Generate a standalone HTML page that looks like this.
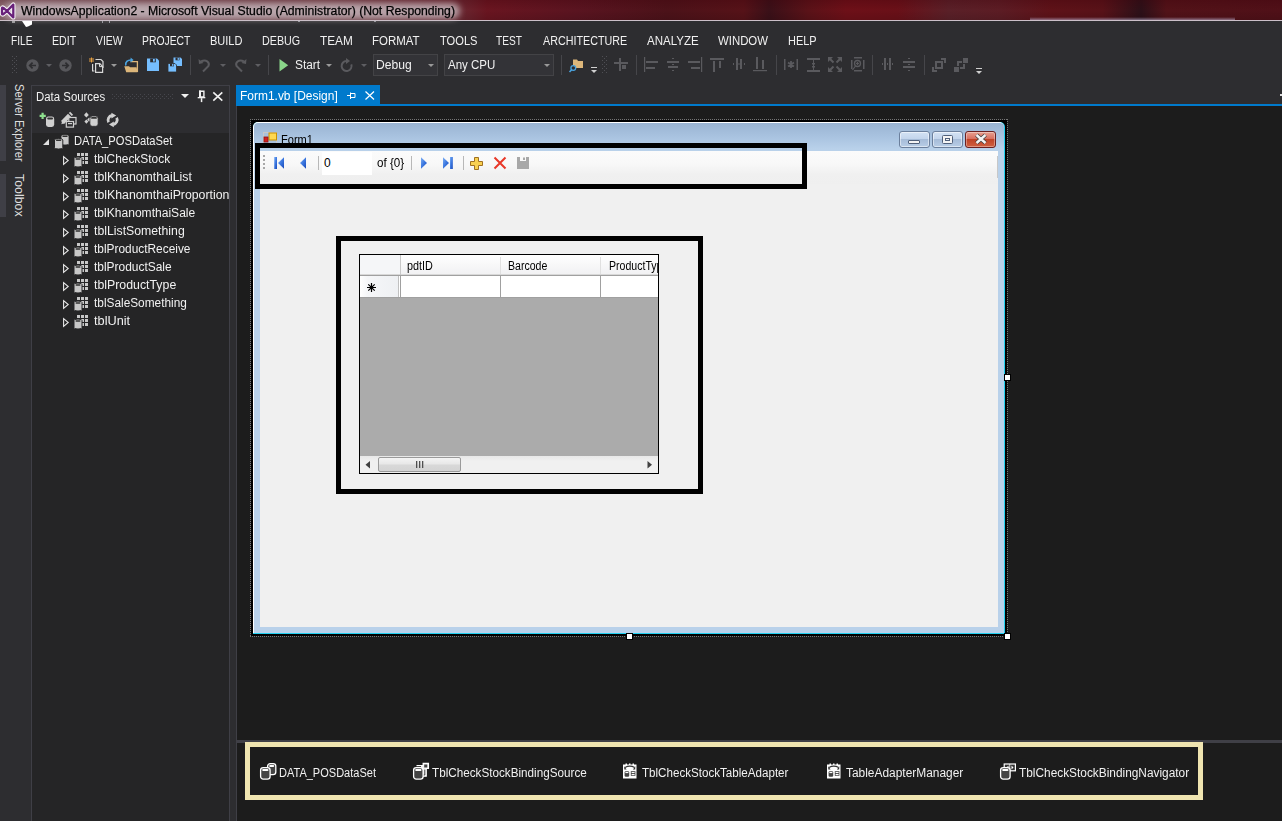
<!DOCTYPE html>
<html><head><meta charset="utf-8">
<style>
*{margin:0;padding:0;box-sizing:border-box}
html,body{width:1282px;height:821px;overflow:hidden;background:#2d2d30;font-family:"Liberation Sans",sans-serif}
body{position:relative}
.a{position:absolute}
.tx{position:absolute;white-space:nowrap}
svg{position:absolute;overflow:visible}
.sep{position:absolute;width:1px;background:#46464a}
.dd{position:absolute;width:0;height:0;border-left:3px solid transparent;border-right:3px solid transparent;border-top:3px solid #999}
</style></head><body>

<!-- ===== TITLE BAR ===== -->
<div class="a" style="left:0;top:0;width:1282px;height:20px;background:linear-gradient(90deg,#8a6870 0%,#7a4850 25%,#6a2630 36%,#6a1520 38%,#5a1420 45%,#4c1219 52%,#561218 58%,#3a1018 60%,#5a1218 63%,#6e1018 66%,#6a1018 70%,#5a2028 74%,#5c1c24 78%,#5e1218 82%,#581218 86%,#2c1018 89%,#521218 91%,#501018 100%)"></div>
<div class="a" style="left:0;top:0;width:1282px;height:20px;background:linear-gradient(180deg,rgba(60,0,10,.25) 0%,rgba(0,0,0,0) 50%,rgba(0,0,0,.1) 100%)"></div>
<div class="a" style="left:4px;top:3px;width:456px;height:16px;background:rgba(200,188,192,.8);filter:blur(3px);border-radius:8px"></div>
<div class="a" style="left:0;top:20px;width:1282px;height:1px;background:#cbbfc8"></div><div class="a" style="left:1030px;top:17px;width:205px;height:3px;background:linear-gradient(180deg,rgba(200,190,220,0) 0%,rgba(200,190,225,.55) 100%);filter:blur(0.6px)"></div>
<svg style="left:0;top:0" width="18" height="21"><g fill="none" stroke-linejoin="round">
<path d="M7,11 L3.4,7.9 Q2,7 2,8.6 V13.4 Q2,15 3.4,14.1 Z M7,11 L13.3,4.6 V17.4 Z" stroke="#f4f0f4" stroke-width="4.4"/>
<path d="M7,11 L3.4,7.9 Q2,7 2,8.6 V13.4 Q2,15 3.4,14.1 Z M7,11 L13.3,4.6 V17.4 Z" stroke="#68217a" stroke-width="2.3"/>
</g></svg>
<svg style="left:12px;top:21px" width="22" height="7"><path d="M0,1 H3" stroke="#fff" stroke-width="1"/><path d="M10,0 H20 V3.5 L16,5.5 L14,6 Z" fill="#fff"/></svg>
<div class="a" style="left:102px;top:21px;width:1px;height:2px;background:#9a9aa0"></div><div class="a" style="left:109px;top:21px;width:1px;height:2px;background:#9a9aa0"></div><div class="a" style="left:298px;top:21px;width:2px;height:1px;background:#9a9aa0"></div><div class="a" style="left:374px;top:21px;width:2px;height:1px;background:#9a9aa0"></div>
<!-- ===== TOOLBAR ===== -->
<!-- grip -->
<svg style="left:12px;top:56px" width="6" height="18"><g fill="#4f4f54">
<rect x="0" y="0" width="1" height="1"/><rect x="4" y="0" width="1" height="1"/><rect x="2" y="2" width="1" height="1"/><rect x="0" y="4" width="1" height="1"/><rect x="4" y="4" width="1" height="1"/><rect x="2" y="6" width="1" height="1"/><rect x="0" y="8" width="1" height="1"/><rect x="4" y="8" width="1" height="1"/><rect x="2" y="10" width="1" height="1"/><rect x="0" y="12" width="1" height="1"/><rect x="4" y="12" width="1" height="1"/><rect x="2" y="14" width="1" height="1"/><rect x="0" y="16" width="1" height="1"/><rect x="4" y="16" width="1" height="1"/></g></svg>
<!-- back / fwd -->
<svg style="left:26px;top:59px" width="13" height="13"><circle cx="6.5" cy="6.5" r="6.2" fill="#57575b"/><path d="M10,6.5 H4 M6.6,3.6 L3.7,6.5 L6.6,9.4" fill="none" stroke="#2d2d30" stroke-width="1.7"/></svg>
<div class="dd" style="left:46px;top:64px;border-top-color:#5e5e62"></div>
<svg style="left:59px;top:59px" width="13" height="13"><circle cx="6.5" cy="6.5" r="6.2" fill="#57575b"/><path d="M3,6.5 H9 M6.4,3.6 L9.3,6.5 L6.4,9.4" fill="none" stroke="#2d2d30" stroke-width="1.7"/></svg>
<div class="sep" style="left:81px;top:55px;height:20px"></div>
<!-- new project -->
<svg style="left:89px;top:57px" width="16" height="16">
<g fill="#e8a040"><rect x="2" y="0.5" width="1" height="5"/><rect x="0" y="2.5" width="5" height="1"/><rect x="0.5" y="1" width="1" height="1"/><rect x="3.5" y="1" width="1" height="1"/><rect x="0.5" y="4" width="1" height="1"/><rect x="3.5" y="4" width="1" height="1"/></g>
<path d="M6.5,2.5 H12 L14,4.5 V11" fill="none" stroke="#d8d8d8" stroke-width="1.2"/>
<path d="M3.6,7 V14 H5.5" fill="none" stroke="#d8d8d8" stroke-width="1.2"/>
<path d="M6.6,6.6 H10.8 L13.6,9.4 V15.4 H6.6 Z" fill="#2d2d30" stroke="#d8d8d8" stroke-width="1.2"/>
<path d="M10.5,6.6 V9.6 H13.6" fill="none" stroke="#d8d8d8" stroke-width="1"/>
</svg>
<div class="dd" style="left:111px;top:64px;border-top-color:#9a9a9a"></div>
<!-- open -->
<svg style="left:124px;top:57px" width="16" height="16">
<path d="M6.5,4.6 H13.4 V15" fill="none" stroke="#dcb67a" stroke-width="1.3"/>
<path d="M0.3,9.3 H5 L6,10.3 H12.6 L13.6,15.2 H2.2 Z" fill="#dcb67a"/>
<path d="M1.8,8.5 C1.2,5 3.5,3 7,3" fill="none" stroke="#4aa3df" stroke-width="1.6"/>
<path d="M6.6,0.4 L9.6,3 L6.6,5.6 Z" fill="#4aa3df"/>
</svg>
<!-- save -->
<svg style="left:147px;top:58px" width="14" height="14"><path d="M0,0.5 H10 L12,2.5 V13 H0 Z" fill="#75beff"/><rect x="3.2" y="0.5" width="5.6" height="3.8" fill="#2d2d30"/><rect x="6" y="1" width="1.8" height="2.6" fill="#75beff"/></svg>
<!-- save all -->
<svg style="left:168px;top:57px" width="15" height="16"><path d="M5.5,0.5 H12.5 L14,2 V9 H5.5 Z" fill="#75beff"/><rect x="7.5" y="0.5" width="4" height="2.8" fill="#2d2d30"/><rect x="9.6" y="0.9" width="1.3" height="2" fill="#75beff"/><path d="M0,6.5 H7 L8.5,8 V15 H0 Z" fill="#75beff" stroke="#2d2d30" stroke-width="0.8"/><rect x="2" y="6.5" width="4" height="2.8" fill="#2d2d30"/><rect x="4.1" y="6.9" width="1.3" height="2" fill="#75beff"/></svg>
<div class="sep" style="left:190px;top:55px;height:20px"></div>
<!-- undo / redo -->
<svg style="left:198px;top:58px" width="14" height="14"><path d="M3,3.5 C8,1 12,4 10.5,8 L5,13.5" fill="none" stroke="#5a5a5e" stroke-width="2"/><path d="M0.5,1 L1,6 L5.5,5 Z" fill="#5a5a5e"/></svg>
<div class="dd" style="left:220px;top:64px;border-top-color:#5e5e62"></div>
<svg style="left:233px;top:58px" width="14" height="14"><path d="M11,3.5 C6,1 2,4 3.5,8 L9,13.5" fill="none" stroke="#5a5a5e" stroke-width="2"/><path d="M13.5,1 L13,6 L8.5,5 Z" fill="#5a5a5e"/></svg>
<div class="dd" style="left:255px;top:64px;border-top-color:#5e5e62"></div>
<div class="sep" style="left:268px;top:55px;height:20px"></div>
<!-- start -->
<svg style="left:279px;top:59px" width="10" height="13"><path d="M0.5,0 L9.2,6.3 L0.5,12.6 Z" fill="#8ad68a"/></svg>
<div class="dd" style="left:326px;top:64px;border-top-color:#9a9a9a"></div>
<svg style="left:340px;top:58px" width="14" height="15"><path d="M6.5,3 A5,5 0 1 0 11.3,6.3" fill="none" stroke="#5a5a5e" stroke-width="2"/><path d="M6,0 L10,3 L6,6 Z" fill="#5a5a5e"/></svg>
<div class="dd" style="left:361px;top:64px;border-top-color:#5e5e62"></div>
<!-- combos -->
<div class="a" style="left:373px;top:54px;width:65px;height:22px;background:#333337;border:1px solid #434346"></div>
<div class="dd" style="left:428px;top:64px;border-top-color:#999"></div>
<div class="a" style="left:444px;top:54px;width:110px;height:22px;background:#333337;border:1px solid #434346"></div>
<div class="dd" style="left:544px;top:64px;border-top-color:#999"></div>
<div class="sep" style="left:561px;top:55px;height:20px"></div>
<!-- find -->
<svg style="left:569px;top:58px" width="15" height="15"><path d="M4,1.5 H8 L9,3 H14 V10 H4 Z" fill="#dcb67a"/><path d="M4,3 H14 V10 H4Z" fill="#dcb67a"/><circle cx="4.3" cy="10" r="2.4" fill="#2d2d30" stroke="#4aa3df" stroke-width="1.3"/><path d="M2.6,11.8 L0.5,14" stroke="#4aa3df" stroke-width="1.6"/></svg>
<svg style="left:591px;top:67px" width="7" height="7"><rect x="0" y="0" width="6" height="1" fill="#d0d0d0"/><path d="M0,3 H6 L3,6 Z" fill="#d0d0d0"/></svg>
<svg style="left:602px;top:56px" width="6" height="18"><g fill="#4f4f54">
<rect x="0" y="0" width="1" height="1"/><rect x="4" y="0" width="1" height="1"/><rect x="2" y="2" width="1" height="1"/><rect x="0" y="4" width="1" height="1"/><rect x="4" y="4" width="1" height="1"/><rect x="2" y="6" width="1" height="1"/><rect x="0" y="8" width="1" height="1"/><rect x="4" y="8" width="1" height="1"/><rect x="2" y="10" width="1" height="1"/><rect x="0" y="12" width="1" height="1"/><rect x="4" y="12" width="1" height="1"/><rect x="2" y="14" width="1" height="1"/><rect x="0" y="16" width="1" height="1"/><rect x="4" y="16" width="1" height="1"/></g></svg>
<!-- layout toolbar gray icons -->
<g></g>
<svg style="left:614px;top:58px" width="15" height="14"><g fill="#5a5a5e"><rect x="5" y="0" width="2" height="13"/><rect x="0" y="4" width="14" height="2"/><rect x="8" y="7" width="4" height="4"/></g></svg>
<div class="sep" style="left:636px;top:55px;height:20px"></div>
<svg style="left:644px;top:57px" width="16" height="16"><g fill="#5a5a5e"><rect x="0" y="0" width="1.2" height="15"/><rect x="2" y="4" width="12" height="2"/><rect x="2" y="10" width="9" height="2"/></g></svg>
<svg style="left:667px;top:57px" width="14" height="16"><g fill="#5a5a5e"><rect x="0" y="4" width="12" height="2"/><rect x="1" y="9" width="10" height="2"/><rect x="5" y="1" width="2" height="1"/><rect x="5" y="7" width="2" height="1"/><rect x="5" y="13" width="2" height="1"/></g></svg>
<svg style="left:688px;top:57px" width="16" height="16"><g fill="#5a5a5e"><rect x="13" y="0" width="1.2" height="15"/><rect x="0" y="4" width="12" height="2"/><rect x="3" y="10" width="9" height="2"/></g></svg>
<svg style="left:710px;top:57px" width="16" height="16"><g fill="#5a5a5e"><rect x="0" y="1" width="14" height="2"/><rect x="3" y="4" width="2" height="11"/><rect x="9" y="4" width="2" height="7"/></g></svg>
<svg style="left:733px;top:57px" width="14" height="16"><g fill="#5a5a5e"><rect x="3" y="1" width="2" height="12"/><rect x="7" y="2" width="2" height="10"/><rect x="0" y="6" width="1" height="2"/><rect x="5.5" y="6" width="1" height="2"/><rect x="11" y="6" width="1" height="2"/></g></svg>
<svg style="left:753px;top:57px" width="16" height="16"><g fill="#5a5a5e"><rect x="0" y="13" width="14" height="1.2"/><rect x="3" y="0" width="2" height="12"/><rect x="9" y="3" width="2" height="9"/></g></svg>
<div class="sep" style="left:776px;top:55px;height:20px"></div>
<svg style="left:784px;top:58px" width="15" height="14"><g fill="#5a5a5e"><rect x="0" y="1" width="1.5" height="11"/><rect x="12.5" y="1" width="1.5" height="11"/><path d="M7,3 V10 M4,4.5 L10,8.5 M10,4.5 L4,8.5" stroke="#5a5a5e" stroke-width="1.8"/></g></svg>
<svg style="left:807px;top:57px" width="14" height="16"><g fill="#5a5a5e"><rect x="0" y="1" width="13" height="2"/><rect x="0" y="13" width="13" height="2"/><rect x="6" y="3" width="1" height="10"/><rect x="5" y="6" width="3" height="1.5"/><rect x="5" y="9" width="3" height="1.5"/></g></svg>
<svg style="left:828px;top:57px" width="15" height="16"><g fill="none" stroke="#5a5a5e" stroke-width="2"><path d="M1,1 L5.5,5.5 M13,1 L8.5,5.5 M1,14 L5.5,9.5 M13,14 L8.5,9.5"/></g><g fill="#5a5a5e"><path d="M0,0 H5 L0,5Z M14,0 H9 L14,5Z M0,15 H5 L0,10Z M14,15 H9 L14,10Z"/></g></svg>
<svg style="left:851px;top:57px" width="14" height="16"><g fill="#5a5a5e"><rect x="3" y="0" width="8" height="1.5"/><rect x="3" y="13" width="8" height="1.5"/><rect x="0" y="3" width="1.5" height="9"/><rect x="12" y="3" width="1.5" height="9"/></g><circle cx="6.5" cy="6.5" r="3" fill="none" stroke="#5a5a5e" stroke-width="1.3"/><path d="M6.5,5 V8 M5,6.5 H8 M4.5,9 L1.5,13" stroke="#5a5a5e" stroke-width="1.2"/></svg>
<div class="sep" style="left:872px;top:55px;height:20px"></div>
<svg style="left:882px;top:57px" width="12" height="16"><g fill="#5a5a5e"><rect x="2" y="1" width="2" height="12"/><rect x="7" y="1" width="2" height="12"/><rect x="0" y="6" width="1" height="2"/><rect x="5" y="6" width="1" height="2"/><rect x="10" y="6" width="1" height="2"/></g></svg>
<svg style="left:903px;top:57px" width="13" height="16"><g fill="#5a5a5e"><rect x="0" y="4" width="12" height="2"/><rect x="0" y="9" width="12" height="2"/><rect x="5" y="1" width="2" height="1"/><rect x="5" y="7" width="2" height="1"/><rect x="5" y="13" width="2" height="1"/></g></svg>
<div class="sep" style="left:924px;top:55px;height:20px"></div>
<svg style="left:932px;top:58px" width="15" height="15"><g fill="#5a5a5e"><path d="M3,3 H11 V11 H3 Z M5,5 V9 H9 V5 Z" fill-rule="evenodd"/><path d="M9,0 H14 V5 H12 V2 H9Z"/><path d="M0,9 H2 V12 H5 V14 H0Z"/></g></svg>
<svg style="left:954px;top:58px" width="15" height="15"><g fill="#5a5a5e"><rect x="9" y="0" width="5" height="5"/><rect x="0" y="9" width="5" height="5"/><path d="M3,3 H8 V5 H5 V8 H3Z"/><path d="M11,6 V11 H6 V9 H9 V6Z"/></g></svg>
<svg style="left:976px;top:68px" width="7" height="7"><rect x="0" y="0" width="6" height="1" fill="#d0d0d0"/><path d="M0,3 H6 L3,6 Z" fill="#d0d0d0"/></svg>

<!-- ===== LEFT STRIP ===== -->
<div class="a" style="left:0;top:85px;width:6px;height:76px;background:#3f3f46"></div>
<div class="a" style="left:0;top:174px;width:6px;height:43px;background:#3f3f46"></div>
<div class="tx" style="left:25px;top:84px;font-size:12px;line-height:12px;color:#dedede;transform-origin:0 0;transform:rotate(90deg) scaleX(0.933)">Server Explorer</div>
<div class="tx" style="left:25px;top:173.5px;font-size:12px;line-height:12px;color:#dedede;transform-origin:0 0;transform:rotate(90deg) scaleX(1.03)">Toolbox</div>

<!-- ===== DATA SOURCES PANEL ===== -->
<div class="a" style="left:31px;top:85px;width:199px;height:736px;border:1px solid #3f3f46;border-bottom:none;background:#2d2d30"></div>
<div class="a" style="left:32px;top:133px;width:197px;height:688px;background:#252526"></div>
<!-- header dots -->
<svg style="left:112px;top:94px" width="62" height="5"><defs><pattern id="gd" width="4" height="4" patternUnits="userSpaceOnUse"><rect x="0" y="0" width="1" height="1" fill="#46464c"/><rect x="2" y="2" width="1" height="1" fill="#46464c"/></pattern></defs><rect width="62" height="5" fill="url(#gd)"/></svg>
<svg style="left:181px;top:94px" width="9" height="5"><path d="M0,0 H8 L4,4 Z" fill="#f1f1f1"/></svg>
<svg style="left:197px;top:90px" width="10" height="13"><path d="M2.7,1.3 H6.9 V7 H2.7 Z" fill="none" stroke="#f1f1f1" stroke-width="1.4"/><rect x="2" y="0.6" width="2" height="6.8" fill="#f1f1f1"/><rect x="0.7" y="7" width="7.6" height="1.3" fill="#f1f1f1"/><rect x="3.8" y="8.2" width="1.5" height="3.9" fill="#f1f1f1"/></svg>
<svg style="left:212px;top:91px" width="12" height="11"><path d="M1.3,1.3 L10.3,9.7 M10.3,1.3 L1.3,9.7" stroke="#f1f1f1" stroke-width="1.6"/></svg>
<!-- panel toolbar icons -->
<svg style="left:39px;top:112px" width="17" height="16"><path d="M3.6,0.8 V7 M0.6,3.9 H6.8" stroke="#8ee08e" stroke-width="2.2"/><rect x="7" y="4.6" width="8.2" height="10.4" rx="2.4" fill="#d0d0d0"/><rect x="8.2" y="5.6" width="5.8" height="1.8" rx="0.9" fill="#333"/></svg>
<svg style="left:61px;top:112px" width="17" height="16"><path d="M1.5,10.5 L8.5,3.3" stroke="#d0d0d0" stroke-width="4.2"/><path d="M9.3,2.5 L10.6,1.2" stroke="#d0d0d0" stroke-width="4.2"/><path d="M0.3,12.2 L1.2,9 L3.5,11.3 Z" fill="#d0d0d0"/><rect x="7.8" y="5.5" width="7.2" height="6.5" fill="#2d2d30" stroke="#d0d0d0" stroke-width="1.2"/><rect x="5.3" y="9.5" width="7.2" height="5.6" fill="#2d2d30" stroke="#d0d0d0" stroke-width="1.2"/><rect x="7" y="11" width="4" height="1.2" fill="#d0d0d0"/></svg>
<svg style="left:83px;top:111px" width="17" height="17"><path d="M3.4,1.3 L5.8,3.9 L3.4,6.5 L1,3.9 Z M6.2,6.4 L8.2,8.6 L6.2,10.8 L4.2,8.6 Z M3.4,8.4 L5.4,10.6 L3.4,12.8 L1.4,10.6 Z" fill="#d0d0d0"/><rect x="6.9" y="5" width="8.2" height="10.3" rx="2.4" fill="#d0d0d0" stroke="#2d2d30" stroke-width="0.8"/><rect x="8.1" y="6" width="5.8" height="1.8" rx="0.9" fill="#333"/></svg>
<svg style="left:106px;top:113px" width="14" height="14"><path d="M2.6,9.3 A4.6,4.6 0 0 1 6,2.5" fill="none" stroke="#d0d0d0" stroke-width="2.8"/><path d="M10.6,4.7 A4.6,4.6 0 0 1 7.2,11.5" fill="none" stroke="#d0d0d0" stroke-width="2.8"/><path d="M5.4,-0.2 L10.2,2.6 L5.4,5.4 Z M7.8,8.6 L3,11.4 L7.8,14.2 Z" fill="#d0d0d0"/></svg>

<!-- tree icons -->
<svg style="left:43px;top:139px" width="7" height="7"><path d="M6,0 V6 H0 Z" fill="#e0e0e0"/></svg>
<svg style="left:54px;top:134px" width="16" height="16"><path d="M7,2 Q7,0.5 11,0.5 Q15,0.5 15,2 V9.5 Q15,11 11,11 Q7,11 7,9.5 Z" fill="#c8c8c8" stroke="#252526" stroke-width="0.8"/><rect x="8.3" y="1.5" width="5.4" height="1.6" rx="0.8" fill="#303030"/><path d="M0.5,6 Q0.5,4.5 4.6,4.5 Q8.8,4.5 8.8,6 V13.5 Q8.8,15 4.6,15 Q0.5,15 0.5,13.5 Z" fill="#c8c8c8" stroke="#252526" stroke-width="1"/><rect x="1.9" y="5.5" width="5.4" height="1.6" rx="0.8" fill="#303030"/></svg>
<svg style="left:63px;top:156px" width="6" height="9"><path d="M0.6,0.6 L5.2,4.5 L0.6,8.4 Z" fill="none" stroke="#e8e8e8" stroke-width="1.1"/></svg>
<svg style="left:74px;top:153px" width="15" height="15"><g fill="#c8c8c8"><rect x="3" y="0" width="3" height="3"/><rect x="7" y="0" width="3" height="3"/><rect x="11" y="0" width="3" height="3"/><rect x="7" y="4" width="3" height="3"/><rect x="11" y="4" width="3" height="3"/><rect x="7" y="8" width="3" height="3"/><rect x="11" y="8" width="3" height="3"/></g><path d="M0,5.5 Q0,4 4,4 Q8,4 8,5.5 V12.5 Q8,14 4,14 Q0,14 0,12.5 Z" fill="#c8c8c8" stroke="#252526" stroke-width="1"/><rect x="1.5" y="5.2" width="5" height="1.6" rx="0.8" fill="#303030"/></svg>
<svg style="left:63px;top:174px" width="6" height="9"><path d="M0.6,0.6 L5.2,4.5 L0.6,8.4 Z" fill="none" stroke="#e8e8e8" stroke-width="1.1"/></svg>
<svg style="left:74px;top:171px" width="15" height="15"><g fill="#c8c8c8"><rect x="3" y="0" width="3" height="3"/><rect x="7" y="0" width="3" height="3"/><rect x="11" y="0" width="3" height="3"/><rect x="7" y="4" width="3" height="3"/><rect x="11" y="4" width="3" height="3"/><rect x="7" y="8" width="3" height="3"/><rect x="11" y="8" width="3" height="3"/></g><path d="M0,5.5 Q0,4 4,4 Q8,4 8,5.5 V12.5 Q8,14 4,14 Q0,14 0,12.5 Z" fill="#c8c8c8" stroke="#252526" stroke-width="1"/><rect x="1.5" y="5.2" width="5" height="1.6" rx="0.8" fill="#303030"/></svg>
<svg style="left:63px;top:192px" width="6" height="9"><path d="M0.6,0.6 L5.2,4.5 L0.6,8.4 Z" fill="none" stroke="#e8e8e8" stroke-width="1.1"/></svg>
<svg style="left:74px;top:189px" width="15" height="15"><g fill="#c8c8c8"><rect x="3" y="0" width="3" height="3"/><rect x="7" y="0" width="3" height="3"/><rect x="11" y="0" width="3" height="3"/><rect x="7" y="4" width="3" height="3"/><rect x="11" y="4" width="3" height="3"/><rect x="7" y="8" width="3" height="3"/><rect x="11" y="8" width="3" height="3"/></g><path d="M0,5.5 Q0,4 4,4 Q8,4 8,5.5 V12.5 Q8,14 4,14 Q0,14 0,12.5 Z" fill="#c8c8c8" stroke="#252526" stroke-width="1"/><rect x="1.5" y="5.2" width="5" height="1.6" rx="0.8" fill="#303030"/></svg>
<svg style="left:63px;top:210px" width="6" height="9"><path d="M0.6,0.6 L5.2,4.5 L0.6,8.4 Z" fill="none" stroke="#e8e8e8" stroke-width="1.1"/></svg>
<svg style="left:74px;top:207px" width="15" height="15"><g fill="#c8c8c8"><rect x="3" y="0" width="3" height="3"/><rect x="7" y="0" width="3" height="3"/><rect x="11" y="0" width="3" height="3"/><rect x="7" y="4" width="3" height="3"/><rect x="11" y="4" width="3" height="3"/><rect x="7" y="8" width="3" height="3"/><rect x="11" y="8" width="3" height="3"/></g><path d="M0,5.5 Q0,4 4,4 Q8,4 8,5.5 V12.5 Q8,14 4,14 Q0,14 0,12.5 Z" fill="#c8c8c8" stroke="#252526" stroke-width="1"/><rect x="1.5" y="5.2" width="5" height="1.6" rx="0.8" fill="#303030"/></svg>
<svg style="left:63px;top:228px" width="6" height="9"><path d="M0.6,0.6 L5.2,4.5 L0.6,8.4 Z" fill="none" stroke="#e8e8e8" stroke-width="1.1"/></svg>
<svg style="left:74px;top:225px" width="15" height="15"><g fill="#c8c8c8"><rect x="3" y="0" width="3" height="3"/><rect x="7" y="0" width="3" height="3"/><rect x="11" y="0" width="3" height="3"/><rect x="7" y="4" width="3" height="3"/><rect x="11" y="4" width="3" height="3"/><rect x="7" y="8" width="3" height="3"/><rect x="11" y="8" width="3" height="3"/></g><path d="M0,5.5 Q0,4 4,4 Q8,4 8,5.5 V12.5 Q8,14 4,14 Q0,14 0,12.5 Z" fill="#c8c8c8" stroke="#252526" stroke-width="1"/><rect x="1.5" y="5.2" width="5" height="1.6" rx="0.8" fill="#303030"/></svg>
<svg style="left:63px;top:246px" width="6" height="9"><path d="M0.6,0.6 L5.2,4.5 L0.6,8.4 Z" fill="none" stroke="#e8e8e8" stroke-width="1.1"/></svg>
<svg style="left:74px;top:243px" width="15" height="15"><g fill="#c8c8c8"><rect x="3" y="0" width="3" height="3"/><rect x="7" y="0" width="3" height="3"/><rect x="11" y="0" width="3" height="3"/><rect x="7" y="4" width="3" height="3"/><rect x="11" y="4" width="3" height="3"/><rect x="7" y="8" width="3" height="3"/><rect x="11" y="8" width="3" height="3"/></g><path d="M0,5.5 Q0,4 4,4 Q8,4 8,5.5 V12.5 Q8,14 4,14 Q0,14 0,12.5 Z" fill="#c8c8c8" stroke="#252526" stroke-width="1"/><rect x="1.5" y="5.2" width="5" height="1.6" rx="0.8" fill="#303030"/></svg>
<svg style="left:63px;top:264px" width="6" height="9"><path d="M0.6,0.6 L5.2,4.5 L0.6,8.4 Z" fill="none" stroke="#e8e8e8" stroke-width="1.1"/></svg>
<svg style="left:74px;top:261px" width="15" height="15"><g fill="#c8c8c8"><rect x="3" y="0" width="3" height="3"/><rect x="7" y="0" width="3" height="3"/><rect x="11" y="0" width="3" height="3"/><rect x="7" y="4" width="3" height="3"/><rect x="11" y="4" width="3" height="3"/><rect x="7" y="8" width="3" height="3"/><rect x="11" y="8" width="3" height="3"/></g><path d="M0,5.5 Q0,4 4,4 Q8,4 8,5.5 V12.5 Q8,14 4,14 Q0,14 0,12.5 Z" fill="#c8c8c8" stroke="#252526" stroke-width="1"/><rect x="1.5" y="5.2" width="5" height="1.6" rx="0.8" fill="#303030"/></svg>
<svg style="left:63px;top:282px" width="6" height="9"><path d="M0.6,0.6 L5.2,4.5 L0.6,8.4 Z" fill="none" stroke="#e8e8e8" stroke-width="1.1"/></svg>
<svg style="left:74px;top:279px" width="15" height="15"><g fill="#c8c8c8"><rect x="3" y="0" width="3" height="3"/><rect x="7" y="0" width="3" height="3"/><rect x="11" y="0" width="3" height="3"/><rect x="7" y="4" width="3" height="3"/><rect x="11" y="4" width="3" height="3"/><rect x="7" y="8" width="3" height="3"/><rect x="11" y="8" width="3" height="3"/></g><path d="M0,5.5 Q0,4 4,4 Q8,4 8,5.5 V12.5 Q8,14 4,14 Q0,14 0,12.5 Z" fill="#c8c8c8" stroke="#252526" stroke-width="1"/><rect x="1.5" y="5.2" width="5" height="1.6" rx="0.8" fill="#303030"/></svg>
<svg style="left:63px;top:300px" width="6" height="9"><path d="M0.6,0.6 L5.2,4.5 L0.6,8.4 Z" fill="none" stroke="#e8e8e8" stroke-width="1.1"/></svg>
<svg style="left:74px;top:297px" width="15" height="15"><g fill="#c8c8c8"><rect x="3" y="0" width="3" height="3"/><rect x="7" y="0" width="3" height="3"/><rect x="11" y="0" width="3" height="3"/><rect x="7" y="4" width="3" height="3"/><rect x="11" y="4" width="3" height="3"/><rect x="7" y="8" width="3" height="3"/><rect x="11" y="8" width="3" height="3"/></g><path d="M0,5.5 Q0,4 4,4 Q8,4 8,5.5 V12.5 Q8,14 4,14 Q0,14 0,12.5 Z" fill="#c8c8c8" stroke="#252526" stroke-width="1"/><rect x="1.5" y="5.2" width="5" height="1.6" rx="0.8" fill="#303030"/></svg>
<svg style="left:63px;top:318px" width="6" height="9"><path d="M0.6,0.6 L5.2,4.5 L0.6,8.4 Z" fill="none" stroke="#e8e8e8" stroke-width="1.1"/></svg>
<svg style="left:74px;top:315px" width="15" height="15"><g fill="#c8c8c8"><rect x="3" y="0" width="3" height="3"/><rect x="7" y="0" width="3" height="3"/><rect x="11" y="0" width="3" height="3"/><rect x="7" y="4" width="3" height="3"/><rect x="11" y="4" width="3" height="3"/><rect x="7" y="8" width="3" height="3"/><rect x="11" y="8" width="3" height="3"/></g><path d="M0,5.5 Q0,4 4,4 Q8,4 8,5.5 V12.5 Q8,14 4,14 Q0,14 0,12.5 Z" fill="#c8c8c8" stroke="#252526" stroke-width="1"/><rect x="1.5" y="5.2" width="5" height="1.6" rx="0.8" fill="#303030"/></svg>

<!-- ===== DOCUMENT AREA ===== -->
<div class="a" style="left:236px;top:85px;width:144px;height:21px;background:#007acc"></div>
<div class="a" style="left:236px;top:104px;width:1046px;height:2px;background:#007acc"></div>
<svg style="left:347px;top:92px" width="9" height="8"><path d="M0,3.5 H3 M3.5,0.5 V7 M3.5,1.5 H8 V5.5 H3.5" fill="none" stroke="#fff" stroke-width="1"/></svg>
<svg style="left:365px;top:91px" width="10" height="9"><path d="M0.5,0.5 L9,8.5 M9,0.5 L0.5,8.5" stroke="#fff" stroke-width="1.2"/></svg>
<div class="a" style="left:236px;top:106px;width:1046px;height:715px;background:#1c1c1c;border-left:1px solid #3f3f46"></div>

<!-- selection dotted frame -->
<div class="a" style="left:251px;top:120px;width:756px;height:516px;background:#000"></div>
<div class="a" style="left:250px;top:119px;width:758px;height:1px;background-image:linear-gradient(90deg,#767676 50%,transparent 50%);background-size:2px 1px"></div>
<div class="a" style="left:250px;top:636px;width:758px;height:1px;background-image:linear-gradient(90deg,#767676 50%,transparent 50%);background-size:2px 1px"></div>
<div class="a" style="left:250px;top:119px;width:1px;height:518px;background-image:linear-gradient(180deg,#767676 50%,transparent 50%);background-size:1px 2px"></div>
<div class="a" style="left:1007px;top:119px;width:1px;height:518px;background-image:linear-gradient(180deg,#767676 50%,transparent 50%);background-size:1px 2px"></div>

<!-- form window -->
<div class="a" style="left:253px;top:122px;width:752px;height:512px;border-radius:5px 5px 0 0;background:#20d0f0"></div>
<div class="a" style="left:253px;top:122px;width:751px;height:511px;border-radius:5px 5px 0 0;background:#fff"></div>
<div class="a" style="left:254px;top:123px;width:750px;height:510px;border-radius:4px 4px 0 0;background:linear-gradient(180deg,#9ab4d2 0px,#a9c3e0 14px,#b9d1ea 26px,#b9d1ea 100%)"></div>
<div class="a" style="left:260px;top:151px;width:738px;height:476px;background:#f0f0f0"></div>
<!-- form icon -->
<svg style="left:263px;top:132px" width="15" height="12"><rect x="0.5" y="0.5" width="13" height="11" fill="#a8c0dc" stroke="#c8c8c8" stroke-width="1"/><rect x="6" y="1" width="7.5" height="7" fill="#ffd850" stroke="#c89000" stroke-width="1"/><rect x="1" y="5" width="4" height="5" fill="#d02020" stroke="#901010" stroke-width="0.8"/></svg>
<div class="tx" style="left:281.4px;top:133px;font-size:12px;line-height:14px;color:#000;transform:scaleX(0.92);transform-origin:0 0">Form1</div>
<!-- caption buttons -->
<div class="a" style="left:899px;top:131px;width:31px;height:17px;border:1px solid #6b7f9c;border-radius:3px;background:linear-gradient(180deg,#d3e2f4 0%,#c3d5ec 45%,#a6bcd8 50%,#b8cde6 100%);box-shadow:inset 0 0 0 1px rgba(255,255,255,.5)"></div>
<div class="a" style="left:908px;top:140px;width:12px;height:4px;background:#f4f4f4;border:1px solid #50607a;border-radius:1px"></div>
<div class="a" style="left:932px;top:131px;width:31px;height:17px;border:1px solid #6b7f9c;border-radius:3px;background:linear-gradient(180deg,#d3e2f4 0%,#c3d5ec 45%,#a6bcd8 50%,#b8cde6 100%);box-shadow:inset 0 0 0 1px rgba(255,255,255,.5)"></div>
<svg style="left:941px;top:134px" width="13" height="11"><rect x="1.5" y="1.5" width="10" height="8" rx="1" fill="#f4f4f4" stroke="#50607a" stroke-width="1"/><rect x="4.5" y="4.5" width="4" height="2" fill="#f4f4f4" stroke="#50607a" stroke-width="1"/></svg>
<div class="a" style="left:965px;top:131px;width:31px;height:17px;border:1px solid #6b2020;border-radius:3px;background:linear-gradient(180deg,#e8a090 0%,#d87060 45%,#c04428 50%,#d06040 100%);box-shadow:inset 0 0 0 1px rgba(255,255,255,.35)"></div>
<svg style="left:974px;top:133px" width="14" height="12"><path d="M2.5,2 L11.5,10 M11.5,2 L2.5,10" stroke="#404040" stroke-width="4"/><path d="M2.5,2 L11.5,10 M11.5,2 L2.5,10" stroke="#f4f4f4" stroke-width="2.4"/></svg>

<!-- binding navigator toolbar -->
<div class="a" style="left:260px;top:151px;width:738px;height:33px;background:linear-gradient(180deg,#fbfbfb 0%,#f8f8f8 40%,#f0f0f0 70%,#efefef 100%)"></div>
<div class="a" style="left:997px;top:156px;width:1px;height:22px;background:#c8c8c8"></div>
<svg style="left:263px;top:155px" width="3" height="15"><g fill="#a8a8a8"><rect x="0" y="0" width="2" height="2"/><rect x="0" y="4" width="2" height="2"/><rect x="0" y="8" width="2" height="2"/><rect x="0" y="12" width="2" height="2"/></g></svg>
<svg style="left:273px;top:157px" width="12" height="12"><defs><linearGradient id="nb" x1="0" y1="0" x2="1" y2="1"><stop offset="0" stop-color="#7eb0f4"/><stop offset="0.5" stop-color="#3c78e0"/><stop offset="1" stop-color="#1848b8"/></linearGradient></defs><rect x="1.2" y="0" width="2.8" height="12" fill="url(#nb)"/><path d="M11,0.3 V11.7 L5,6 Z" fill="url(#nb)"/></svg>
<svg style="left:299px;top:157px" width="8" height="12"><path d="M7,0.3 V11.7 L1,6 Z" fill="url(#nb)"/></svg>
<div class="a" style="left:318px;top:156px;width:1px;height:14px;background:#b8b8b8"></div>
<div class="a" style="left:322px;top:152px;width:50px;height:23px;background:#fff"></div>
<div class="tx" style="left:324px;top:156px;font-size:12px;line-height:14px;color:#000">0</div>
<div class="tx" style="left:376.7px;top:156px;font-size:12px;line-height:14px;color:#000;transform:scaleX(0.97);transform-origin:0 0">of {0}</div>
<div class="a" style="left:411px;top:156px;width:1px;height:14px;background:#b8b8b8"></div>
<svg style="left:420px;top:157px" width="8" height="12"><path d="M1,0.3 V11.7 L7,6 Z" fill="url(#nb)"/></svg>
<svg style="left:442px;top:157px" width="12" height="12"><path d="M1,0.3 V11.7 L7,6 Z" fill="url(#nb)"/><rect x="8" y="0" width="2.8" height="12" fill="url(#nb)"/></svg>
<div class="a" style="left:463px;top:156px;width:1px;height:14px;background:#b8b8b8"></div>
<svg style="left:470px;top:157px" width="13" height="13"><path d="M4.5,0.5 H8.5 V4.5 H12.5 V8.5 H8.5 V12.5 H4.5 V8.5 H0.5 V4.5 H4.5 Z" fill="#f8d050" stroke="#a07020" stroke-width="1"/></svg>
<svg style="left:493px;top:156px" width="14" height="14"><path d="M1.5,1.5 L12.5,12.5 M12.5,1.5 L1.5,12.5" stroke="#e83828" stroke-width="2"/></svg>
<svg style="left:517px;top:157px" width="13" height="13"><path d="M0,0 H3 V4 H9 V0 H12 V12 H0 Z" fill="#a8a8a8"/><rect x="6" y="0.5" width="2" height="2.5" fill="#a8a8a8"/></svg>

<!-- DataGridView -->
<div class="a" style="left:359px;top:254px;width:300px;height:220px;background:#ababab;border:1px solid #000"></div>
<div class="a" style="left:360px;top:255px;width:298px;height:21px;background:linear-gradient(180deg,#fff 0%,#f7f7f8 50%,#f0f0f2 100%)"></div>
<div class="a" style="left:360px;top:255px;width:40px;height:21px;background:#f5f6f8"></div>
<div class="a" style="left:360px;top:274px;width:298px;height:1px;background:#d8d8d8"></div>
<div class="a" style="left:360px;top:275px;width:298px;height:1px;background:#a0a0a0"></div>
<div class="a" style="left:400px;top:255px;width:1px;height:20px;background:#c8c8c8"></div>
<div class="a" style="left:500px;top:257px;width:1px;height:17px;background:#e0e0e0"></div>
<div class="a" style="left:600px;top:257px;width:1px;height:17px;background:#e0e0e0"></div>
<div class="a" style="left:360px;top:276px;width:298px;height:22px;background:#fff"></div>
<div class="a" style="left:360px;top:276px;width:39px;height:21px;background:linear-gradient(90deg,#fff 0%,#f5f6f8 20%,#eef0f3 100%)"></div>
<div class="a" style="left:398px;top:276px;width:1px;height:22px;background:#c0c0c0"></div>
<div class="a" style="left:400px;top:276px;width:1px;height:22px;background:#a0a0a0"></div>
<div class="a" style="left:500px;top:276px;width:1px;height:22px;background:#a0a0a0"></div>
<div class="a" style="left:600px;top:276px;width:1px;height:22px;background:#a0a0a0"></div>
<div class="a" style="left:360px;top:297px;width:298px;height:1px;background:#a0a0a0"></div>
<svg style="left:367px;top:283px" width="9" height="9"><path d="M4.5,0 V9 M0,4.5 H9 M1.3,1.3 L7.7,7.7 M7.7,1.3 L1.3,7.7" stroke="#000" stroke-width="1.2"/></svg>
<div class="tx" style="left:407.4px;top:259px;font-size:12px;line-height:14px;color:#000;transform:scaleX(0.90);transform-origin:0 0">pdtID</div>
<div class="tx" style="left:508.3px;top:259px;font-size:12px;line-height:14px;color:#000;transform:scaleX(0.88);transform-origin:0 0">Barcode</div>
<div class="a" style="left:601px;top:255px;width:57px;height:20px;overflow:hidden"><div class="tx" style="left:7.7px;top:4px;font-size:12px;line-height:14px;color:#000;transform:scaleX(0.88);transform-origin:0 0">ProductType</div></div>
<!-- scrollbar -->
<div class="a" style="left:360px;top:456px;width:298px;height:17px;background:linear-gradient(180deg,#e8e8e8 0%,#f0f0f0 30%,#f0f0f0 100%)"></div>
<svg style="left:365px;top:461px" width="6" height="8"><path d="M5,0 V7.5 L0.5,3.75 Z" fill="#404040"/></svg>
<svg style="left:647px;top:461px" width="6" height="8"><path d="M0.5,0 V7.5 L5,3.75 Z" fill="#404040"/></svg>
<div class="a" style="left:378px;top:457px;width:83px;height:15px;border:1px solid #9a9a9a;border-radius:2px;background:linear-gradient(180deg,#f4f4f4 0%,#e8e8e8 45%,#d8d8d8 55%,#d4d4d4 100%)"></div>
<svg style="left:415px;top:461px" width="9" height="8"><g fill="#505050"><rect x="1" y="0" width="1.3" height="7"/><rect x="4" y="0" width="1.3" height="7"/><rect x="7" y="0" width="1.3" height="7"/></g></svg>

<!-- annotation black rects -->
<div class="a" style="left:255px;top:143px;width:552px;height:46px;border:5px solid #000"></div>
<div class="a" style="left:336px;top:236px;width:367px;height:258px;border:5px solid #000"></div>

<!-- selection handles -->
<div class="a" style="left:626px;top:633px;width:7px;height:7px;background:#fff;border:1px solid #000"></div>
<div class="a" style="left:1004px;top:374px;width:7px;height:7px;background:#fff;border:1px solid #000"></div>
<div class="a" style="left:1004px;top:633px;width:7px;height:7px;background:#fff;border:1px solid #000"></div>

<div class="a" style="left:1280px;top:94px;width:2px;height:2px;background:#ddd"></div>
<!-- ===== TRAY ===== -->
<div class="a" style="left:237px;top:740px;width:1045px;height:3px;background:#3f3f46"></div>
<div class="a" style="left:245px;top:742px;width:958px;height:58px;border:5px solid #efe4b0"></div>
<svg style="left:259px;top:762px" width="19" height="19"><rect x="8.6" y="1.6" width="8.2" height="11" rx="2.6" fill="#444" stroke="#fff" stroke-width="1.3"/><rect x="10.2" y="3.1" width="4.999999999999999" height="2" rx="1" fill="#fff"/><rect x="1.6" y="5.6" width="9.5" height="11.5" rx="2.6" fill="#444" stroke="#fff" stroke-width="1.3"/><rect x="3.2" y="7.1" width="6.3" height="2" rx="1" fill="#fff"/></svg>
<svg style="left:412px;top:762px" width="19" height="19"><path d="M4.5,3.6 H11.2 V1.4 H16.4 V6.4 H14.2 V14.2 H8 V3.6" fill="#eee" stroke="#fff" stroke-width="1.3"/><rect x="12.2" y="2.5" width="3.1" height="3" fill="#444"/><path d="M5.5,4.5 H9 M12.8,7.6 V13 H9" fill="none" stroke="#444" stroke-width="1"/><rect x="1.6" y="5.6" width="9.5" height="11.5" rx="2.6" fill="#444" stroke="#fff" stroke-width="1.3"/><rect x="3.2" y="7.1" width="6.3" height="2" rx="1" fill="#fff"/></svg>
<svg style="left:622px;top:763px" width="17" height="17"><path d="M1,1.5 H3.5 V0.6 H5 V1.5 H7 V0.6 H8.5 V1.5 H10.5 V0.6 H12 V1.5 H14.5 V15.5 H1 Z" fill="#fff"/><path d="M3,4.5 Q7.8,1.8 12.6,4.5" fill="none" stroke="#333" stroke-width="1.2"/><path d="M2.2,3.3 L4.6,6.6 L2.3,6.6Z M13.3,3.3 L10.9,6.6 L13.2,6.6Z" fill="#333"/><rect x="2.6" y="8.2" width="4.6" height="5.6" rx="1.2" fill="#444"/><rect x="3.4" y="9" width="3" height="1.1" fill="#fff"/><rect x="8.8" y="8.2" width="4.6" height="4.6" fill="#444"/><rect x="9.6" y="9" width="3" height="1.1" fill="#fff"/><rect x="9.6" y="11" width="3" height="1.1" fill="#fff"/></svg>
<svg style="left:826px;top:763px" width="17" height="17"><path d="M1,1.5 H3.5 V0.6 H5 V1.5 H7 V0.6 H8.5 V1.5 H10.5 V0.6 H12 V1.5 H14.5 V15.5 H1 Z" fill="#fff"/><path d="M3,4.5 Q7.8,1.8 12.6,4.5" fill="none" stroke="#333" stroke-width="1.2"/><path d="M2.2,3.3 L4.6,6.6 L2.3,6.6Z M13.3,3.3 L10.9,6.6 L13.2,6.6Z" fill="#333"/><rect x="2.6" y="8.2" width="4.6" height="5.6" rx="1.2" fill="#444"/><rect x="3.4" y="9" width="3" height="1.1" fill="#fff"/><rect x="8.8" y="8.2" width="4.6" height="4.6" fill="#444"/><rect x="9.6" y="9" width="3" height="1.1" fill="#fff"/><rect x="9.6" y="11" width="3" height="1.1" fill="#fff"/></svg>
<svg style="left:999px;top:762px" width="19" height="19"><rect x="4.6" y="1.4" width="12.4" height="8" fill="#fff"/><rect x="5.8" y="2.6" width="4.6" height="5.6" fill="#333"/><rect x="11.2" y="2.6" width="4.6" height="5.6" fill="#333"/><path d="M12.5,3.6 V7.4 L14.5,5.5Z M9.5,3.6 V7.4 L7.5,5.5Z" fill="#fff"/><rect x="1.6" y="5.6" width="9.5" height="11.5" rx="2.6" fill="#444" stroke="#fff" stroke-width="1.3"/><rect x="3.2" y="7.1" width="6.3" height="2" rx="1" fill="#fff"/></svg>

<div class="tx" style="left:21.00px;top:3.84px;font-size:12px;line-height:14px;color:#000;transform:scaleX(1.0188);transform-origin:0 0;-webkit-text-stroke:0.25px #000">WindowsApplication2 - Microsoft Visual Studio (Administrator) (Not Responding)</div>
<div class="tx" style="left:10.65px;top:34.24px;font-size:12px;line-height:14px;color:#f1f1f1;transform:scaleX(0.8458);transform-origin:0 0;">FILE</div>
<div class="tx" style="left:51.52px;top:34.24px;font-size:12px;line-height:14px;color:#f1f1f1;transform:scaleX(0.8846);transform-origin:0 0;">EDIT</div>
<div class="tx" style="left:96.00px;top:34.24px;font-size:12px;line-height:14px;color:#f1f1f1;transform:scaleX(0.8677);transform-origin:0 0;">VIEW</div>
<div class="tx" style="left:142.34px;top:34.24px;font-size:12px;line-height:14px;color:#f1f1f1;transform:scaleX(0.8636);transform-origin:0 0;">PROJECT</div>
<div class="tx" style="left:210.38px;top:34.24px;font-size:12px;line-height:14px;color:#f1f1f1;transform:scaleX(0.9176);transform-origin:0 0;">BUILD</div>
<div class="tx" style="left:262.20px;top:34.24px;font-size:12px;line-height:14px;color:#f1f1f1;transform:scaleX(0.8951);transform-origin:0 0;">DEBUG</div>
<div class="tx" style="left:320.10px;top:34.24px;font-size:12px;line-height:14px;color:#f1f1f1;transform:scaleX(0.9844);transform-origin:0 0;">TEAM</div>
<div class="tx" style="left:371.54px;top:34.24px;font-size:12px;line-height:14px;color:#f1f1f1;transform:scaleX(0.9551);transform-origin:0 0;">FORMAT</div>
<div class="tx" style="left:439.90px;top:34.24px;font-size:12px;line-height:14px;color:#f1f1f1;transform:scaleX(0.9275);transform-origin:0 0;">TOOLS</div>
<div class="tx" style="left:496.30px;top:34.24px;font-size:12px;line-height:14px;color:#f1f1f1;transform:scaleX(0.8452);transform-origin:0 0;">TEST</div>
<div class="tx" style="left:542.90px;top:34.24px;font-size:12px;line-height:14px;color:#f1f1f1;transform:scaleX(0.8957);transform-origin:0 0;">ARCHITECTURE</div>
<div class="tx" style="left:647.00px;top:34.24px;font-size:12px;line-height:14px;color:#f1f1f1;transform:scaleX(0.9623);transform-origin:0 0;">ANALYZE</div>
<div class="tx" style="left:718.40px;top:34.24px;font-size:12px;line-height:14px;color:#f1f1f1;transform:scaleX(0.9491);transform-origin:0 0;">WINDOW</div>
<div class="tx" style="left:788.39px;top:34.24px;font-size:12px;line-height:14px;color:#f1f1f1;transform:scaleX(0.9133);transform-origin:0 0;">HELP</div>
<div class="tx" style="left:295.21px;top:57.64px;font-size:12px;line-height:14px;color:#f1f1f1;transform:scaleX(0.9917);transform-origin:0 0;">Start</div>
<div class="tx" style="left:376.39px;top:57.64px;font-size:12px;line-height:14px;color:#f1f1f1;transform:scaleX(1.0088);transform-origin:0 0;">Debug</div>
<div class="tx" style="left:448.00px;top:57.64px;font-size:12px;line-height:14px;color:#f1f1f1;transform:scaleX(0.9592);transform-origin:0 0;">Any CPU</div>
<div class="tx" style="left:35.65px;top:89.54px;font-size:12px;line-height:14px;color:#f1f1f1;transform:scaleX(0.9507);transform-origin:0 0;">Data Sources</div>
<div class="tx" style="left:239.80px;top:88.84px;font-size:12px;line-height:14px;color:#ffffff;transform:scaleX(0.9969);transform-origin:0 0;">Form1.vb [Design]</div>
<div class="tx" style="left:74.47px;top:133.64px;font-size:12px;line-height:14px;color:#f1f1f1;transform:scaleX(0.9305);transform-origin:0 0;">DATA_POSDataSet</div>
<div class="tx" style="left:93.90px;top:151.64px;font-size:12px;line-height:14px;color:#f1f1f1;transform:scaleX(0.9922);transform-origin:0 0;">tblCheckStock</div>
<div class="tx" style="left:93.90px;top:169.64px;font-size:12px;line-height:14px;color:#f1f1f1;transform:scaleX(1.0253);transform-origin:0 0;">tblKhanomthaiList</div>
<div class="tx" style="left:93.90px;top:187.64px;font-size:12px;line-height:14px;color:#f1f1f1;transform:scaleX(1.0250);transform-origin:0 0;">tblKhanomthaiProportion</div>
<div class="tx" style="left:93.90px;top:205.64px;font-size:12px;line-height:14px;color:#f1f1f1;transform:scaleX(1.0050);transform-origin:0 0;">tblKhanomthaiSale</div>
<div class="tx" style="left:93.90px;top:223.64px;font-size:12px;line-height:14px;color:#f1f1f1;transform:scaleX(1.0227);transform-origin:0 0;">tblListSomething</div>
<div class="tx" style="left:93.90px;top:241.64px;font-size:12px;line-height:14px;color:#f1f1f1;transform:scaleX(0.9907);transform-origin:0 0;">tblProductReceive</div>
<div class="tx" style="left:93.90px;top:259.64px;font-size:12px;line-height:14px;color:#f1f1f1;transform:scaleX(0.9949);transform-origin:0 0;">tblProductSale</div>
<div class="tx" style="left:93.90px;top:277.64px;font-size:12px;line-height:14px;color:#f1f1f1;transform:scaleX(1.0275);transform-origin:0 0;">tblProductType</div>
<div class="tx" style="left:93.90px;top:295.64px;font-size:12px;line-height:14px;color:#f1f1f1;transform:scaleX(0.9872);transform-origin:0 0;">tblSaleSomething</div>
<div class="tx" style="left:93.90px;top:313.64px;font-size:12px;line-height:14px;color:#f1f1f1;transform:scaleX(1.0618);transform-origin:0 0;">tblUnit</div>
<div class="tx" style="left:278.78px;top:765.64px;font-size:12px;line-height:14px;color:#f1f1f1;transform:scaleX(0.9181);transform-origin:0 0;">DATA_POSDataSet</div>
<div class="tx" style="left:432.20px;top:765.64px;font-size:12px;line-height:14px;color:#f1f1f1;transform:scaleX(0.9747);transform-origin:0 0;">TblCheckStockBindingSource</div>
<div class="tx" style="left:642.30px;top:765.64px;font-size:12px;line-height:14px;color:#f1f1f1;transform:scaleX(0.9671);transform-origin:0 0;">TblCheckStockTableAdapter</div>
<div class="tx" style="left:846.00px;top:765.64px;font-size:12px;line-height:14px;color:#f1f1f1;transform:scaleX(0.9932);transform-origin:0 0;">TableAdapterManager</div>
<div class="tx" style="left:1019.00px;top:765.64px;font-size:12px;line-height:14px;color:#f1f1f1;transform:scaleX(0.9884);transform-origin:0 0;">TblCheckStockBindingNavigator</div>
</body></html>
